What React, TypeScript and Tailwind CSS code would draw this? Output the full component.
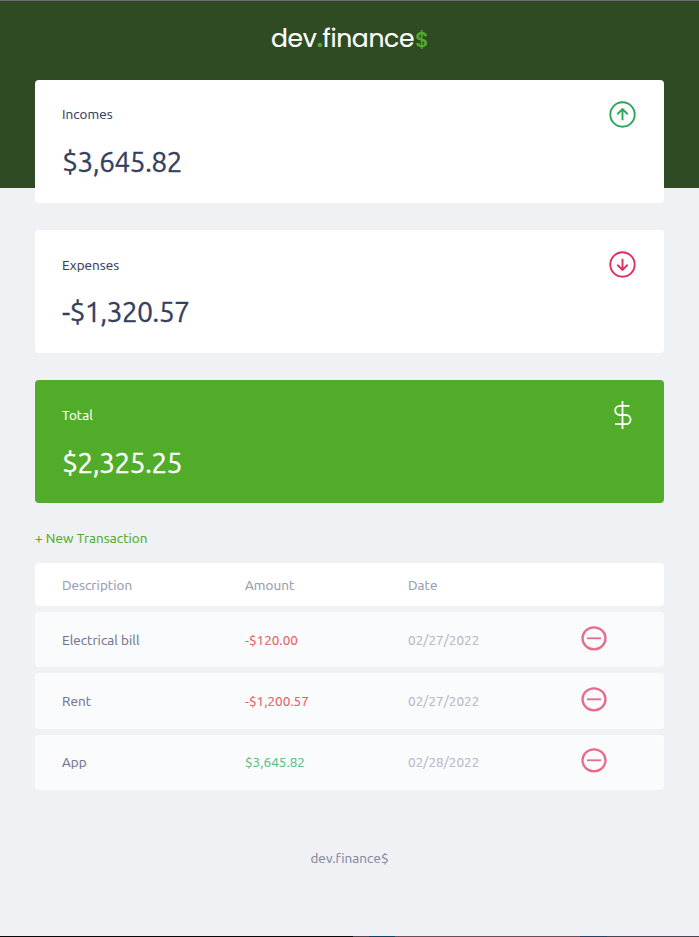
import React from "react";

type CardProps = {
  label: string;
  labelClass?: string;
  amount: string;
  amountClass?: string;
  total?: boolean;
  children: React.ReactNode;
};

function Card({ label, labelClass = "mt-1", amount, amountClass = "mt-4", total, children }: CardProps) {
  return (
    <section
      className={`flex h-[123px] justify-between rounded pl-[27px] pr-[28px] pt-[21px] ${
        total ? "bg-[#51ad29] text-white" : "bg-white text-[#363f5f]"
      }`}
    >
      <div>
        <h3 className={`leading-5 tracking-[0.05px] ${labelClass}`}>{label}</h3>
        <p className={`text-[28.5px] leading-10 tracking-[-0.75px] [-webkit-text-stroke:0.3px] ${amountClass}`}>{amount}</p>
      </div>
      {children}
    </section>
  );
}

function Arrow({ down }: { down?: boolean }) {
  return (
    <svg width="27" height="27" viewBox="0 0 27 27" fill="none" stroke={down ? "#e0305d" : "#2aa85a"} strokeWidth="1.9">
      <circle cx="13.5" cy="13.5" r="12.2" />
      <path d={down ? "M13.5 7.8v10.8M8.3 13.8l5.2 5.1 5.2-5.1" : "M13.5 19.2V8.4M8.3 13.2l5.2-5.1 5.2 5.1"} />
    </svg>
  );
}

function Minus({ className }: { className: string }) {
  return (
    <svg width="26" height="26" viewBox="0 0 26 26" fill="none" stroke="#e76c89" className={className}>
      <ellipse cx="13" cy="13.3" rx="11.5" ry="11" strokeWidth="2.3" />
      <path d="M6 13.3h14" strokeWidth="1.8" />
    </svg>
  );
}

const rows = [
  { name: "Electrical bill", amount: "-$120.00", amountClass: "text-[#e55d65]", date: "02/27/2022", height: "h-[55px]", text: "pt-px", icon: "mb-[3px]" },
  { name: "Rent", amount: "-$1,200.57", amountClass: "text-[#e55d65]", date: "02/27/2022", height: "h-[56px]", text: "", icon: "mb-1" },
  { name: "App", amount: "$3,645.82", amountClass: "text-[#5bbf80]", date: "02/28/2022", height: "h-[55px]", text: "pb-px", icon: "mb-[5px]" },
];

export default function App() {
  return (
    <div className="flex h-[937px] w-[699px] flex-col overflow-hidden bg-[#f0f1f5] font-['Ubuntu','Noto_Sans',sans-serif] text-[13.5px] [-webkit-text-stroke:0.15px]">
      <header className="flex h-[188px] shrink-0 justify-center border-t border-[#706e72] bg-[#2f4b23] pt-[22px]">
        <h1 className="h-8 whitespace-nowrap pl-px font-['Poppins','Lato',sans-serif] text-[25px] leading-8 tracking-[-0.35px] text-white [-webkit-text-stroke:0.15px]">
          dev<span className="font-semibold text-[#51ad29]">.</span>finance<span className="ml-px text-[22px] font-medium text-[#51ad29]">$</span>
        </h1>
      </header>

      <main className="mx-[35px] -mt-[108px] flex flex-col">
        <div className="flex flex-col gap-[27px]">
          <Card label="Incomes" labelClass="mt-[3px]" amountClass="mt-[17px]" amount="$3,645.82">
            <Arrow />
          </Card>
          <Card label="Expenses" amount="-$1,320.57">
            <Arrow down />
          </Card>
          <Card label="Total" amount="$2,325.25" amountClass="mt-[17px]" total>
            <svg width="27" height="28" viewBox="0 0 27 28" fill="none" stroke="white" strokeWidth="1.8">
              <path d="M13.5 0v28M20.5 4.8H10.8a4.6 4.6 0 0 0 0 9.2h6.2a4.6 4.6 0 0 1 0 9.2H6" />
            </svg>
          </Card>
        </div>

        <button className="mt-[25px] h-5 self-start whitespace-nowrap leading-5 tracking-[0.07px] text-[#51ad29]">+ New Transaction</button>

        <div className="mt-[15px] flex flex-col gap-1.5 tracking-[0.06px]">
          <div className="grid h-[43px] grid-cols-[183px_163px_173px_1fr] items-center rounded bg-white pl-[27px] pt-0.5 text-[#969cb3]">
            <span>Description</span>
            <span>Amount</span>
            <span>Date</span>
          </div>
          {rows.map((row) => (
            <div
              key={row.name}
              className={`grid ${row.height} grid-cols-[183px_163px_173px_1fr] items-center rounded bg-[#fafbfd] pl-[27px] leading-5`}
            >
              <span className={`text-[#737590] ${row.text}`}>{row.name}</span>
              <span className={`tracking-normal ${row.text} ${row.amountClass}`}>{row.amount}</span>
              <span className={`text-[#b5b8c8] ${row.text}`}>{row.date}</span>
              <Minus className={row.icon} />
            </div>
          ))}
        </div>
      </main>

      <footer className="mt-[58px] text-center leading-5 tracking-[0.06px] text-[#858aa4]">dev.finance$</footer>
      <div className="mt-auto flex h-px shrink-0">
        <span className="w-[353px] bg-[#08080a]" />
        <span className="w-[16px] bg-[#53444f]" />
        <span className="w-[26px] bg-[#0e4262]" />
        <span className="w-[185px] bg-[#67505c]" />
        <span className="w-[27px] bg-[#263f63]" />
        <span className="flex-1 bg-[#494653]" />
      </div>
    </div>
  );
}
